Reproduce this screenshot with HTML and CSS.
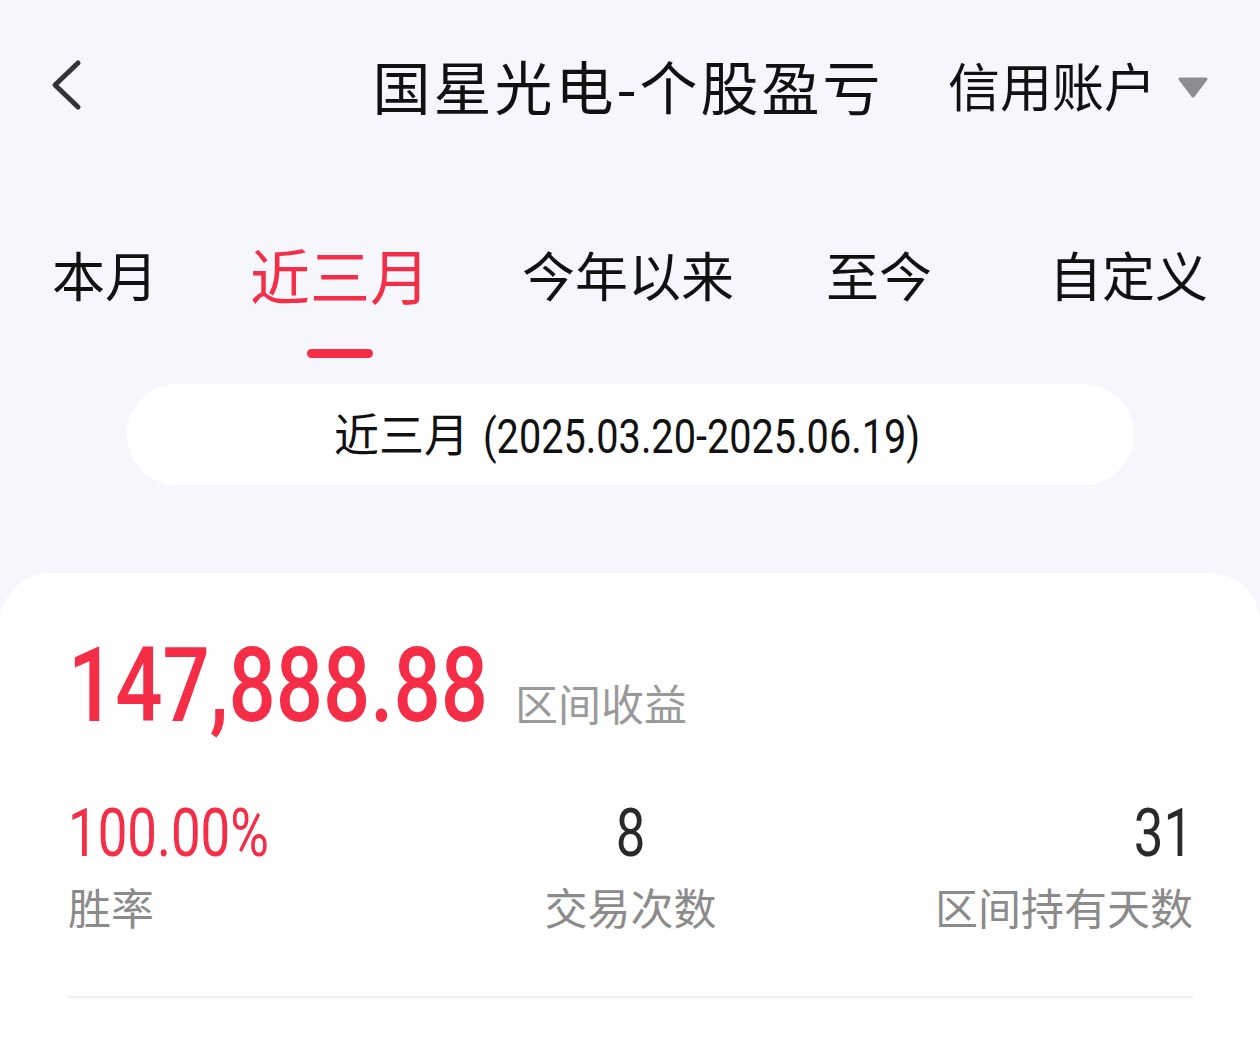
FILE: index.html
```html
<!DOCTYPE html>
<html lang="zh-CN">
<head>
  <meta charset="UTF-8" />
  <meta name="viewport" content="width=device-width, initial-scale=1.0"/>
  <title>国星光电-个股盈亏</title>
  <link rel="stylesheet" href="styles.css">
</head>
<body>

  <header class="topbar">
    <a class="back" href="#" aria-label="返回">
      <svg width="36" height="52" viewBox="0 0 36 52">
        <path d="M30 4 L7 26 L30 48" fill="none" stroke="#333" stroke-width="5" stroke-linecap="round" stroke-linejoin="round"/>
      </svg>
    </a>
    <h1 class="title">国星光电-个股盈亏</h1>
    <div class="account">
      <span>信用账户</span>
      <svg class="caret" width="30" height="22" viewBox="0 0 30 22">
        <path d="M2 3 H28 L15 20 Z" fill="#8e8c93" stroke="#8e8c93" stroke-width="3" stroke-linejoin="round"/>
      </svg>
    </div>
  </header>

  <nav class="tabs">
    <div class="tab">本月</div>
    <div class="tab active">近三月</div>
    <div class="tab">今年以来</div>
    <div class="tab">至今</div>
    <div class="tab last">自定义</div>
  </nav>

  <div class="range">
    <span>近三月</span>
    <span class="range-date"><span class="cond">(2025.03.20-2025.06.19)</span></span>
  </div>

  <section class="card">
    <div class="profit">
      <span class="profit-value"><span class="cond">147,888.88</span></span>
      <span class="profit-label">区间收益</span>
    </div>

    <div class="stats">
      <div class="stat">
        <div class="stat-value red"><span class="cond">100.00%</span></div>
        <div class="stat-label">胜率</div>
      </div>
      <div class="stat center">
        <div class="stat-value"><span class="cond">8</span></div>
        <div class="stat-label">交易次数</div>
      </div>
      <div class="stat right">
        <div class="stat-value"><span class="cond">31</span></div>
        <div class="stat-label">区间持有天数</div>
      </div>
    </div>

    <div class="divider"></div>
  </section>

</body>
</html>
```

FILE: styles.css
```css
body {
  margin: 0;
  background: #f6f7fd;
  color: #111;
  font-family: "Noto Sans CJK SC", "Noto Sans", sans-serif;
}

/* narrow digits, like the app's DIN style font */
.cond {
  display: inline-block;
  font-family: Roboto, "Liberation Sans", sans-serif;
  white-space: nowrap;
  transform: scaleX(0.8);
  transform-origin: left center;
}

.topbar {
  height: 170px;
  display: grid;
  grid-template-columns: 1fr auto 1fr;
  align-items: center;
  padding: 0 52px 6px 48px;
}

.back {
  display: flex;
  align-items: center;
}

.title {
  margin: 0;
  font-size: 58px;
  font-weight: 400;
  line-height: 1;
  letter-spacing: 3px;
  color: #111;
}

.account {
  display: flex;
  align-items: center;
  justify-content: flex-end;
  gap: 22px;
  font-size: 52px;
  line-height: 1;
}

.caret {
  margin-top: 4px;
}

.tabs {
  display: flex;
  gap: 92px;
  padding: 70px 52px 0;
}

.tab {
  flex-shrink: 0;
  white-space: nowrap;
  font-size: 53px;
  line-height: 56px;
  height: 56px;
  color: #111;
  position: relative;
  padding-bottom: 56px;
}

.tab.last {
  margin-left: auto;
}

.tab.active {
  color: #f52d47;
  font-size: 60px;
}

.tab.active::after {
  content: "";
  position: absolute;
  left: 50%;
  bottom: 0;
  width: 66px;
  height: 9px;
  margin-left: -33px;
  background: #f52d47;
  border-radius: 5px;
}

.range {
  margin: 26px 126px 0 127px;
  height: 101px;
  border-radius: 51px;
  background: #fff;
  display: flex;
  align-items: center;
  justify-content: center;
  font-size: 45px;
  color: #111;
  gap: 14px;
  padding-bottom: 4px;
  box-sizing: border-box;
}

.range-date {
  width: 444px;
  font-size: 49px;
  line-height: 1;
  margin-top: 2px;
}

.range-date .cond {
  transform: scaleX(0.81);
}

.card {
  margin-top: 88px;
  background: #fff;
  border-radius: 50px 50px 0 0;
  padding: 51px 67px 60px 68px;
}

.profit {
  display: flex;
  align-items: baseline;
  gap: 35px;
}

.profit-value {
  width: 412px;
  font-size: 104px;
  line-height: 1;
  color: #f52d47;
  font-weight: 500;
}

.profit-label {
  font-size: 43px;
  color: #9a9a9a;
}

.stats {
  display: grid;
  grid-template-columns: 1fr 1fr 1fr;
  margin-top: 56px;
}

.stat.center {
  text-align: center;
}

.stat.center .cond {
  transform-origin: center;
}

.stat.right {
  text-align: right;
}

.stat.right .cond {
  transform-origin: right center;
}

.stat-value {
  font-size: 66px;
  line-height: 1;
  color: #2a2a2a;
}

.stat-value.red {
  color: #f52d47;
}

.stat-label {
  margin-top: 18px;
  font-size: 43px;
  line-height: 1;
  color: #8b8b8b;
}

.divider {
  margin-top: 68px;
  height: 2px;
  background: #efeff2;
}
```
